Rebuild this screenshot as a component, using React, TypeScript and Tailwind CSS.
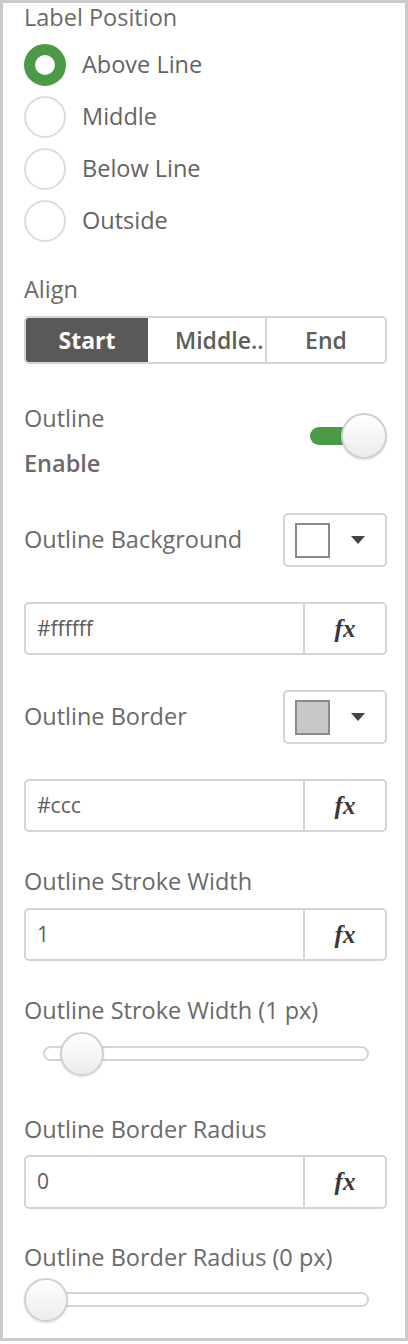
import React from "react";

const font = { fontFamily: "'Open Sans', 'Liberation Sans', sans-serif" };

function Radio({ label, checked }: { label: string; checked?: boolean }) {
  return (
    <div className="flex h-[52px] items-center">
      {checked ? (
        <div className="h-[42px] w-[42px] shrink-0 rounded-full border-[11px] border-[#4a9a46] bg-white" />
      ) : (
        <div className="h-[42px] w-[42px] shrink-0 rounded-full border-2 border-[#dcdcdc] bg-white" />
      )}
      <span className="ml-[16px] text-[23.5px] text-[#636363]">{label}</span>
    </div>
  );
}

function Label({ children, className = "" }: { children: React.ReactNode; className?: string }) {
  return (
    <div className={`flex h-[28px] items-center whitespace-nowrap text-[23.5px] text-[#6a6a6a] ${className}`}>
      {children}
    </div>
  );
}

function FxInput({ value, className = "" }: { value: string; className?: string }) {
  return (
    <div className={`flex h-[53px] rounded-[5px] border-2 border-[#d4d4d4] bg-white ${className}`}>
      <div className="flex flex-1 items-center pl-[11px] text-[21px] text-[#5d5d5d]">{value}</div>
      <div className="flex w-[82px] items-center justify-center border-l-2 border-[#d4d4d4]">
        <span className="font-['Liberation_Serif'] text-[25px] font-bold italic text-[#383838]">fx</span>
      </div>
    </div>
  );
}

function ColorRow({ label, swatch, className = "" }: { label: string; swatch: string; className?: string }) {
  return (
    <div className={`flex items-center justify-between ${className}`}>
      <span className="text-[23.5px] text-[#6a6a6a]">{label}</span>
      <div className="flex h-[54px] w-[104px] items-center rounded-[5px] border-2 border-[#d4d4d4] bg-white pl-[10px]">
        <div className={`h-[35px] w-[35px] border-2 border-[#8a8a8a] ${swatch}`} />
        <svg className="ml-[20px]" width="16" height="10" viewBox="0 0 16 10">
          <path d="M1 1 L15 1 L8 9 Z" fill="#444" />
        </svg>
      </div>
    </div>
  );
}

function Slider({ knobLeft, className = "" }: { knobLeft: string; className?: string }) {
  return (
    <div className={`relative h-[44px] ${className}`}>
      <div className="absolute left-[19px] top-[14px] h-[15px] w-[326px] rounded-full border-2 border-[#d4d4d4] bg-white" />
      <div
        className={`absolute top-0 h-[44px] w-[44px] rounded-full border-2 border-[#d0d0d0] bg-gradient-to-b from-white to-[#ececec] shadow-sm ${knobLeft}`}
      />
    </div>
  );
}

export default function App() {
  return (
    <div className="min-h-[1344px] bg-white" style={font}>
      <div className="h-[1341px] border-[3px] border-[#cbcbcb] pl-[21px] pr-[18px] pt-[1px]">
        <Label>Label Position</Label>
        <div className="mt-[7px]">
          <Radio label="Above Line" checked />
          <Radio label="Middle" />
          <Radio label="Below Line" />
          <Radio label="Outside" />
        </div>

        <Label className="mt-[29px]">Align</Label>
        <div className="mt-[12px] flex h-[48px] overflow-hidden rounded-[5px] border-2 border-[#d4d4d4] text-[23px] font-semibold">
          <div className="flex w-[122px] items-center justify-center bg-[#595959] font-bold text-white">Start</div>
          <div className="flex w-[119px] items-center whitespace-nowrap border-r-2 border-[#d4d4d4] pl-[27px] text-[#5d5d5d]">
            Middle..
          </div>
          <div className="flex flex-1 items-center justify-center text-[#5d5d5d]">End</div>
        </div>

        <div className="mt-[41px] flex items-start justify-between">
          <div>
            <Label>Outline</Label>
            <Label className="mt-[17px] font-semibold text-[#5f5f5f]">Enable</Label>
          </div>
          <div className="relative mt-[8px] h-[46px] w-[77px]">
            <div className="absolute left-0 top-[14px] h-[18px] w-[60px] rounded-full bg-[#4a9a46]" />
            <div className="absolute right-0 top-0 h-[46px] w-[46px] rounded-full border-2 border-[#d0d0d0] bg-gradient-to-b from-white to-[#ececec] shadow-sm" />
          </div>
        </div>

        <ColorRow label="Outline Background" swatch="bg-white" className="mt-[35px]" />
        <FxInput value="#ffffff" className="mt-[35px]" />
        <ColorRow label="Outline Border" swatch="bg-[#c8c8c8]" className="mt-[35px]" />
        <FxInput value="#ccc" className="mt-[35px]" />

        <Label className="mt-[36px]">Outline Stroke Width</Label>
        <FxInput value="1" className="mt-[12px] h-[52px]" />
        <Label className="mt-[36px]">Outline Stroke Width (1 px)</Label>
        <Slider knobLeft="left-[36px]" className="mt-[7px]" />

        <Label className="mt-[40px]">Outline Border Radius</Label>
        <FxInput value="0" className="mt-[11px] h-[54px]" />
        <Label className="mt-[35px]">Outline Border Radius (0 px)</Label>
        <Slider knobLeft="left-0" className="mt-[6px]" />
      </div>
    </div>
  );
}
